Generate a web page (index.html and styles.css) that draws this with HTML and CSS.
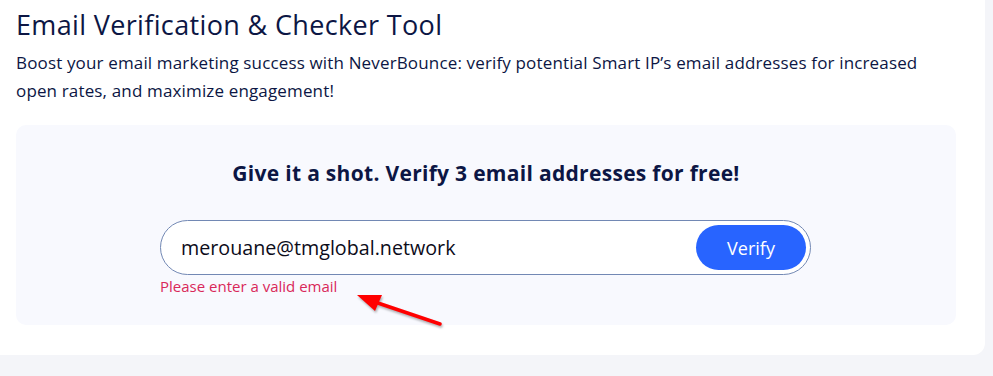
FILE: index.html
```html
<!DOCTYPE html>
<html lang="en">
  <head>
    <meta charset="UTF-8" />
    <meta name="viewport" content="width=device-width, initial-scale=1.0" />
    <title>Email Verification &amp; Checker Tool</title>
    <link rel="stylesheet" href="styles.css">
  </head>
  <body>
    <div class="card">
      <h1 class="title">Email Verification &amp; Checker Tool</h1>
      <p class="intro">
        Boost your email marketing success with NeverBounce: verify potential Smart IP’s email addresses for increased
        open rates, and maximize engagement!
      </p>
      <div class="checker">
        <h2 class="checker-title">Give it a shot. Verify 3 email addresses for free!</h2>
        <form class="checker-form" onsubmit="return false">
          <div class="field">
            <input class="email" type="text" value="merouane@tmglobal.network" />
            <button class="verify" type="submit">Verify</button>
          </div>
          <div class="error">Please enter a valid email</div>
        </form>
        <!-- annotation arrow -->
        <svg class="arrow" width="100" height="45" viewBox="0 0 100 45">
          <line x1="18" y1="9" x2="89" y2="33" stroke="#f00" stroke-width="3.5" stroke-linecap="round" />
          <polygon points="6,4 31,4 24,20" fill="#f00" />
        </svg>
      </div>
    </div>
  </body>
</html>
```

FILE: styles.css
```css
body {
  margin: 0;
  background-color: #f4f5f9;
  font-family: "Open Sans", "Noto Sans", sans-serif;
  color: #0c1644;
}
.card {
  width: 985px;
  height: 355px;
  box-sizing: border-box;
  background-color: #fff;
  border-radius: 0 0 12px 0;
  padding: 5px 29px 0 16px;
}
.title {
  font-size: 27px;
  font-weight: 500;
  margin: 0;
  line-height: 40px;
  letter-spacing: 0.35px;
}
.intro {
  font-size: 17px;
  line-height: 28px;
  margin: 4px 0 0;
  letter-spacing: 0.15px;
}
.checker {
  position: relative;
  margin-top: 20px;
  height: 200px;
  box-sizing: border-box;
  background-color: #f8f9fe;
  border-radius: 10px;
  padding-top: 33px;
}
.checker-title {
  text-align: center;
  font-size: 21px;
  font-weight: 700;
  line-height: 30px;
  margin: 0 0 32px;
  letter-spacing: 0.3px;
}
.checker-form {
  width: 651px;
  margin-left: 144px;
}
.field {
  display: flex;
  align-items: center;
  height: 55px;
  box-sizing: border-box;
  background-color: #fff;
  border: 1px solid #7288b4;
  border-radius: 28px;
  padding: 0 4px 0 20px;
}
.email {
  flex: 1;
  border: none;
  outline: none;
  background: transparent;
  font-family: inherit;
  font-size: 19.7px;
  color: #0c0c1a;
  padding: 0;
}
.verify {
  width: 110px;
  height: 45px;
  border: none;
  border-radius: 23px;
  background-color: #2864ff;
  color: #fff;
  font-family: inherit;
  font-size: 18px;
  font-weight: 500;
  cursor: pointer;
}
.error {
  color: #d9285a;
  font-size: 15px;
  line-height: 20px;
  margin-top: 1px;
}
.arrow {
  position: absolute;
  left: 335px;
  top: 166px;
  filter: drop-shadow(1px 2px 1px rgba(0, 0, 0, 0.3));
}
```
